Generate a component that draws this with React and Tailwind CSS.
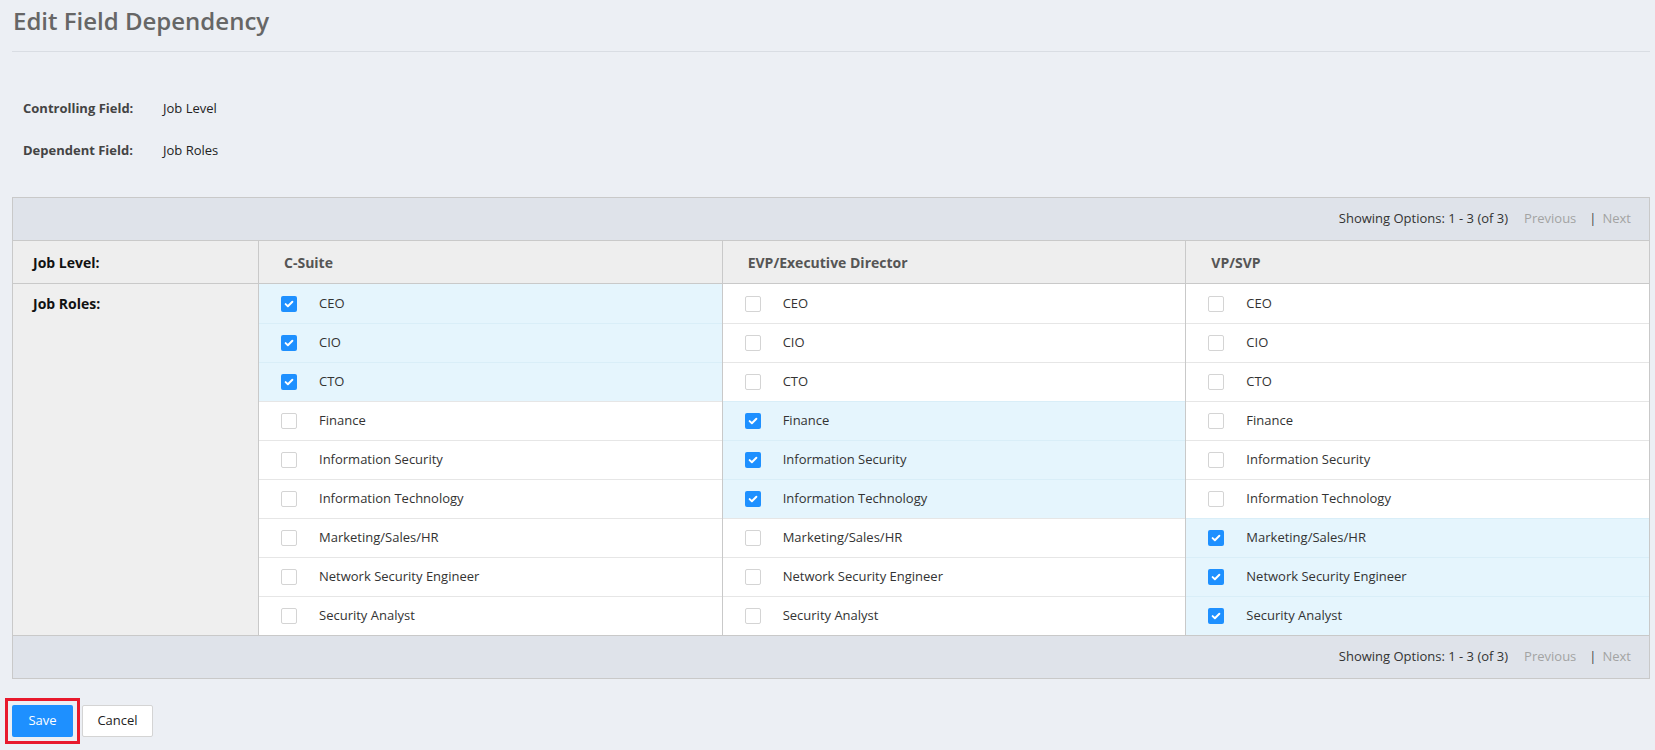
import React from "react";

const roles = [
  "CEO",
  "CIO",
  "CTO",
  "Finance",
  "Information Security",
  "Information Technology",
  "Marketing/Sales/HR",
  "Network Security Engineer",
  "Security Analyst",
];

const columns = [
  { name: "C-Suite", checked: ["CEO", "CIO", "CTO"] },
  {
    name: "EVP/Executive Director",
    checked: ["Finance", "Information Security", "Information Technology"],
  },
  {
    name: "VP/SVP",
    checked: ["Marketing/Sales/HR", "Network Security Engineer", "Security Analyst"],
  },
];

const Checkbox = ({ checked }) =>
  checked ? (
    <span className="w-4 h-4 rounded-[2px] bg-[#1e90ff] flex items-center justify-center flex-shrink-0">
      <svg viewBox="0 0 16 16" className="w-3 h-3" fill="none">
        <path
          d="M3.5 8.2l3 2.8 6-6"
          stroke="#fff"
          strokeWidth="2.6"
          strokeLinecap="round"
          strokeLinejoin="round"
        />
      </svg>
    </span>
  ) : (
    <span className="w-4 h-4 rounded-[2px] bg-white border border-[#d4d4d4] flex-shrink-0" />
  );

const Pager = ({ border }) => (
  <div
    className={`h-[43px] bg-[#dfe3ea] flex items-center justify-end pr-[18px] text-[13px] ${border}`}
  >
    <span className="text-[#333]">Showing Options: 1 - 3 (of 3)</span>
    <span className="text-[#a3a3a3] ml-[16px]">Previous</span>
    <span className="text-[#444] ml-[13px] mr-[6px]">|</span>
    <span className="text-[#a3a3a3]">Next</span>
  </div>
);

export default function App() {
  return (
    <div
      className="min-h-screen bg-[#eceff4] pl-[12px] pr-[5px] pt-[3px]"
      style={{ fontFamily: '"Open Sans", "Noto Sans", sans-serif' }}
    >
      <h1 className="text-[24px] leading-[36px] font-semibold text-[#666] pl-[1px] pb-[12px] border-b border-[#d9dde3]">
        Edit Field Dependency
      </h1>

      <div className="pl-[11px] pt-[45px] text-[13px]">
        <div className="flex items-center h-[24px]">
          <span className="w-[140px] font-bold text-[#444]">Controlling Field:</span>
          <span className="text-[#222]">Job Level</span>
        </div>
        <div className="flex items-center h-[24px] mt-[18px]">
          <span className="w-[140px] font-bold text-[#444]">Dependent Field:</span>
          <span className="text-[#222]">Job Roles</span>
        </div>
      </div>

      <div className="mt-[34px] border border-[#c9c9c9] bg-white">
        <Pager border="border-b border-[#c9c9c9]" />

        <div className="grid grid-cols-[245px_1fr_1fr_1fr] bg-[#eeeeee] border-b border-[#c9c9c9] h-[43px] text-[14px] font-bold">
          <div className="flex items-center pl-[20px] text-[#111]">Job Level:</div>
          {columns.map((c) => (
            <div
              key={c.name}
              className="flex items-center pl-[25px] text-[#555] border-l border-[#c9c9c9]"
            >
              {c.name}
            </div>
          ))}
        </div>

        <div className="grid grid-cols-[245px_1fr_1fr_1fr]">
          <div className="bg-[#efefef]">
            <div className="h-[39px] flex items-center pl-[20px] text-[14px] font-bold text-[#111]">
              Job Roles:
            </div>
          </div>
          {columns.map((c) => (
            <div key={c.name} className="border-l border-[#c9c9c9] flex flex-col">
              {roles.map((r, i) => {
                const on = c.checked.includes(r);
                return (
                  <div
                    key={r}
                    className={`h-[39px] flex items-center pl-[22px] gap-[22px] text-[13px] text-[#333] ${
                      i > 0 ? "border-t" : ""
                    } ${on ? "bg-[#e5f5fd] border-[#d9eef8]" : "bg-white border-[#e6e6e6]"}`}
                  >
                    <Checkbox checked={on} />
                    <span>{r}</span>
                  </div>
                );
              })}
            </div>
          ))}
        </div>

        <Pager border="border-t border-[#c9c9c9]" />
      </div>

      <div className="flex items-center gap-[2px] mt-[19px] -ml-[7px]">
        <div className="border-[3px] border-[#e8192c] p-[4px]">
          <button className="block w-[61px] h-[32px] bg-[#1e90ff] text-white text-[13px] rounded-[2px]">
            Save
          </button>
        </div>
        <button className="w-[71px] h-[32px] bg-white text-[#222] text-[13px] rounded-[2px] border border-[#d4d4d4]">
          Cancel
        </button>
      </div>
    </div>
  );
}
